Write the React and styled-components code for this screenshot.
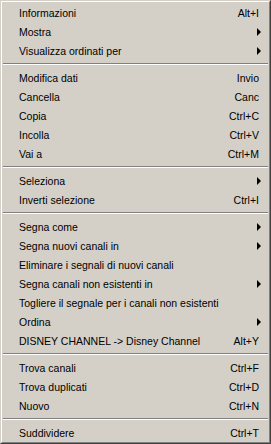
import React from 'react';
import styled, { createGlobalStyle } from 'styled-components';

const Global = createGlobalStyle`
  html, body {
    margin: 0;
    padding: 0;
    background: #d4d0c8;
  }
`;

const Menu = styled.div`
  box-sizing: border-box;
  width: 271px;
  height: 444px;
  background: #d4d0c8;
  border-top: 1px solid #d4d0c8;
  border-left: 1px solid #d4d0c8;
  border-right: 1px solid #404040;
  border-bottom: 1px solid #404040;
  font-family: "Liberation Sans", Arial, sans-serif;
  font-size: 10.5px;
  color: #000;
`;

const Inner = styled.div`
  box-sizing: border-box;
  height: 100%;
  border-top: 1px solid #fff;
  border-left: 1px solid #fff;
  border-right: 1px solid #808080;
  border-bottom: 1px solid #808080;
  padding-top: 1px;
  display: flex;
  flex-direction: column;
`;

const Row = styled.div`
  height: 19px;
  display: flex;
  align-items: center;
  padding: 0 10px 0 17px;
`;

const Label = styled.span`
  flex: 1;
  white-space: nowrap;
`;

const Shortcut = styled.span`
  white-space: nowrap;
`;

const Arrow = styled.span`
  width: 0;
  height: 0;
  margin-right: -2px;
  border-top: 4px solid transparent;
  border-bottom: 4px solid transparent;
  border-left: 4px solid #000;
`;

const Separator = styled.div`
  height: 8px;
  display: flex;
  flex-direction: column;
  justify-content: center;
  padding: 0 1px;

  &::before {
    content: '';
    height: 1px;
    background: #808080;
  }
  &::after {
    content: '';
    height: 1px;
    background: #fff;
  }
`;

const groups = [
  [
    ['Informazioni', 'Alt+I'],
    ['Mostra', '>'],
    ['Visualizza ordinati per', '>'],
  ],
  [
    ['Modifica dati', 'Invio'],
    ['Cancella', 'Canc'],
    ['Copia', 'Ctrl+C'],
    ['Incolla', 'Ctrl+V'],
    ['Vai a', 'Ctrl+M'],
  ],
  [
    ['Seleziona', '>'],
    ['Inverti selezione', 'Ctrl+I'],
  ],
  [
    ['Segna come', '>'],
    ['Segna nuovi canali in', '>'],
    ['Eliminare i segnali di nuovi canali', ''],
    ['Segna canali non esistenti in', '>'],
    ['Togliere il segnale per i canali non esistenti', ''],
    ['Ordina', '>'],
    ['DISNEY CHANNEL -> Disney Channel', 'Alt+Y'],
  ],
  [
    ['Trova canali', 'Ctrl+F'],
    ['Trova duplicati', 'Ctrl+D'],
    ['Nuovo', 'Ctrl+N'],
  ],
  [['Suddividere', 'Ctrl+T']],
];

const App = () => (
  <>
    <Global />
    <Menu>
      <Inner>
        {groups.map((items, g) => (
          <React.Fragment key={g}>
            {g > 0 && <Separator />}
            {items.map(([label, right]) => (
              <Row key={label}>
                <Label>{label}</Label>
                {right === '>' ? <Arrow /> : <Shortcut>{right}</Shortcut>}
              </Row>
            ))}
          </React.Fragment>
        ))}
      </Inner>
    </Menu>
  </>
);

export default App;
